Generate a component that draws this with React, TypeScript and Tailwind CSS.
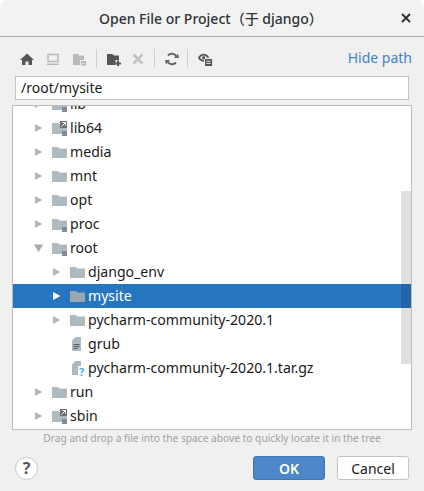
const font = "font-['Noto_Sans','Noto_Sans_CJK_SC',sans-serif]"

function Folder({ fill = '#afb9c0', badge }: { fill?: string; badge?: 'lock' | 'link' }) {
	return (
		<svg width="16" height="16" viewBox="0 0 16 16" className="shrink-0">
			<path d="M0 3h6l1.500 1.500H15V14H0z" fill={fill} />
			{badge && <rect x="10" y="11" width="5" height="5" fill="#7f8b96" />}
			{badge === 'link' && (
				<>
					<rect x="8" y="1" width="7" height="7" fill="#6e6e6e" />
					<path d="M9.500 6.500l4-4M10.500 2.500h3v3" stroke="#fff" strokeWidth="1" fill="none" />
				</>
			)}
		</svg>
	)
}

function Arrow({ open, light }: { open?: boolean; light?: boolean }) {
	return (
		<svg width="10" height="10" viewBox="0 0 10 10" className="shrink-0">
			{open ? (
				<path d="M0 1.500h9L4.500 9z" fill="#a8a8a8" />
			) : (
				<path d="M1 1l7.500 4L1 9z" fill={light ? '#ffffff' : '#b5b5b5'} />
			)}
		</svg>
	)
}

function FileIcon({ unknown }: { unknown?: boolean }) {
	return (
		<svg width="16" height="16" viewBox="0 0 16 16" className="shrink-0">
			<path d="M5.500 1H11V15H2V4.500z" fill="#afb9c0" />
			{unknown ? (
				<>
					<path d="M8 6h8v10H8z" fill="#ffffff" />
					<text x="9" y="15.500" fontSize="11" fontWeight="700" fill="#40a9dc" fontFamily="Noto Sans, sans-serif">?</text>
				</>
			) : (
				<path d="M3.500 8.500h6M3.500 10.500h6M3.500 12.500h4" stroke="#4f5a62" strokeWidth="1" />
			)}
		</svg>
	)
}

function Row({
	depth,
	label,
	icon,
	arrow,
	open,
	selected,
}: {
	depth: 0 | 1
	label: string
	icon: React.ReactNode
	arrow?: boolean
	open?: boolean
	selected?: boolean
}) {
	return (
		<div
			className={`flex h-6 items-center ${depth === 1 ? 'pl-[39px]' : 'pl-[21px]'} ${selected ? 'bg-[#2675bf] text-white' : 'text-[#1a1a1a]'}`}
		>
			<span className="flex w-[18px] items-center">{arrow && <Arrow open={open} light={selected} />}</span>
			{icon}
			<span className="mb-[1px] ml-[2px] whitespace-nowrap text-[14.1px]">{label}</span>
		</div>
	)
}

function ToolIcon({ children }: { children: React.ReactNode }) {
	return (
		<svg width="16" height="16" viewBox="0 0 16 16" className="shrink-0">
			{children}
		</svg>
	)
}

function Sep() {
	return <div className="h-[19px] w-px bg-[#cfcfcf]" />
}

export default function App() {
	return (
		<div className={`flex h-[491px] w-[424px] flex-col overflow-hidden rounded-t-[8px] bg-[#f0f0f0] ${font}`}>
			<div className="flex h-[37px] shrink-0 items-center justify-between border-b border-[#a9a9a9] bg-[#f2f2f2] pl-[99px] pr-[13px]">
				<span className="whitespace-nowrap text-[14px] font-medium text-[#2e3436]">Open File or Project（于 django）</span>
				<svg width="10" height="10" viewBox="0 0 10 10" className="shrink-0">
					<path d="M1 1l8 8M9 1l-8 8" stroke="#2e3436" strokeWidth="2" />
				</svg>
			</div>

			<div className="flex h-[39px] shrink-0 items-center justify-between pl-[19px] pr-[12px] pt-[4px]">
				<div className="flex items-center">
					<ToolIcon>
						<path d="M8 2.500L1 9h2v5h3.500v-3.500h3V14H13V9h2z" fill="#555" />
					</ToolIcon>
					<div className="ml-[10px]">
						<ToolIcon>
							<path d="M3 3.500h10v7H3z" fill="none" stroke="#b9b9b9" strokeWidth="1.500" />
							<path d="M2 12.500h12V14H2z" fill="#b9b9b9" />
						</ToolIcon>
					</div>
					<div className="ml-[10px] mr-[9px]">
						<ToolIcon>
							<path d="M2 3h5l1.500 1.500H13V9H9v5H2z" fill="#b9b9b9" />
							<path d="M10 10h5v4.500h-5z" fill="#b9b9b9" />
							<path d="M11.500 12h2v1h-2z" fill="#f0f0f0" />
						</ToolIcon>
					</div>
					<Sep />
					<div className="ml-[9px]">
						<ToolIcon>
							<path d="M1 3h5.500L8 4.500h5V9H9.500v5H1z" fill="#555" />
							<path d="M12 9.500v5.500M9.500 12.500H15" stroke="#555" strokeWidth="2" />
						</ToolIcon>
					</div>
					<div className="ml-[8px] mr-[8px]">
						<ToolIcon>
							<path d="M3.500 3.500l9 9M12.500 3.500l-9 9" stroke="#c2c2c2" strokeWidth="2.500" />
						</ToolIcon>
					</div>
					<Sep />
					<div className="ml-[9px] mr-[7px]">
						<ToolIcon>
							<path d="M12.500 6A5 5 0 0 0 4 4.500" fill="none" stroke="#666" strokeWidth="2" />
							<path d="M3.500 10A5 5 0 0 0 12 11.500" fill="none" stroke="#666" strokeWidth="2" />
							<path d="M10 7h5l-1-4.500zM1 9h5l-4 4.500z" fill="#666" />
						</ToolIcon>
					</div>
					<Sep />
					<div className="ml-[9px]">
						<svg width="16" height="16" viewBox="0 0 18 18" className="shrink-0">
							<path d="M1 7.500C2.500 4.500 5 3 7.500 3S12.500 4.500 14 7.500H11.500C10.500 6 9 5.200 7.500 5.200S4.500 6 3.500 7.500C4.500 9 6 10 8 10v2.200C5 12 2.500 10.500 1 7.500z" fill="#555" />
							<circle cx="7.500" cy="7.500" r="1.800" fill="#555" />
							<path d="M9 9h8v8H9z" fill="#555" />
							<path d="M10.500 11.500h5M10.500 14h5" stroke="#f0f0f0" strokeWidth="1" />
						</svg>
					</div>
				</div>
				<span className="mb-[2px] text-[14px] text-[#3f86c8]">Hide path</span>
			</div>

			<div className="mx-[15px] flex h-[24px] shrink-0 items-center border border-[#c4c4c4] bg-white px-[5px] pb-[1px] text-[14px] text-[#1a1a1a]">
				/root/mysite
			</div>

			<div className="relative mx-[12px] mt-[5px] h-[325px] shrink-0 overflow-hidden border border-[#bdbdbd] bg-white">
				<div className="-mt-[14px]">
					<Row depth={0} label="lib" arrow icon={<Folder badge="lock" />} />
					<Row depth={0} label="lib64" arrow icon={<Folder badge="link" />} />
					<Row depth={0} label="media" arrow icon={<Folder />} />
					<Row depth={0} label="mnt" arrow icon={<Folder />} />
					<Row depth={0} label="opt" arrow icon={<Folder />} />
					<Row depth={0} label="proc" arrow icon={<Folder badge="lock" />} />
					<Row depth={0} label="root" arrow open icon={<Folder badge="lock" />} />
					<Row depth={1} label="django_env" arrow icon={<Folder />} />
					<Row depth={1} label="mysite" arrow selected icon={<Folder fill="#9aa7b0" />} />
					<Row depth={1} label="pycharm-community-2020.1" arrow icon={<Folder />} />
					<Row depth={1} label="grub" icon={<FileIcon />} />
					<Row depth={1} label="pycharm-community-2020.1.tar.gz" icon={<FileIcon unknown />} />
					<Row depth={0} label="run" arrow icon={<Folder />} />
					<Row depth={0} label="sbin" arrow icon={<Folder badge="link" />} />
				</div>
				<div className="absolute right-0 top-[85px] h-[173px] w-[10px] bg-black/[0.12]" />
			</div>

			<div className="h-[16px] shrink-0 text-center text-[10.2px] leading-[16px] text-[#a0a0a0]">
				Drag and drop a file into the space above to quickly locate it in the tree
			</div>

			<div className="mt-[10px] flex shrink-0 items-center justify-between px-[15px]">
				<div className="flex h-[23px] w-[23px] items-center justify-center rounded-full border border-[#c9c9c9] bg-white text-[16px] font-bold text-[#555]">
					?
				</div>
				<div className="flex gap-[12px]">
					<button className="h-[24px] w-[72px] rounded-[3px] border border-[#3f76b3] bg-[#4d87c7] text-[14px] font-semibold text-white">
						OK
					</button>
					<button className="h-[24px] w-[72px] rounded-[3px] border border-[#c4c4c4] bg-white text-[14px] text-[#1a1a1a]">
						Cancel
					</button>
				</div>
			</div>
		</div>
	)
}
